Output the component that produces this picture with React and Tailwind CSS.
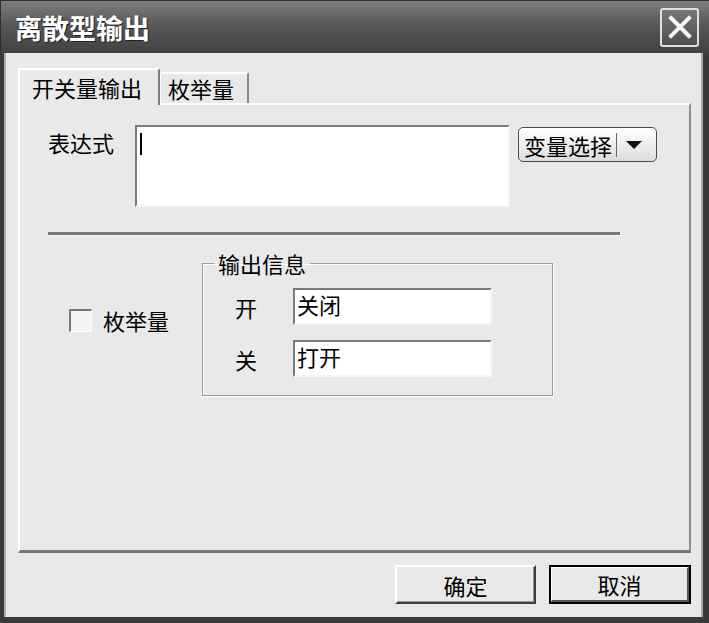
import React from 'react'

const cjk = { fontFamily: '"Noto Sans CJK SC", "Noto Sans", sans-serif' }

function Sunken({ className = '', children }) {
  return (
    <div className={`bg-white border-t-2 border-l-2 border-b-2 border-r-2 border-t-[#7a7a7a] border-l-[#7a7a7a] border-b-[#f6f6f6] border-r-[#f6f6f6] ${className}`}>
      {children}
    </div>
  )
}

export default function App() {
  return (
    <div className="w-[709px] h-[623px] flex flex-col bg-[#e9e9e9] text-black overflow-hidden" style={cjk}>
      {/* title bar */}
      <div className="h-[53px] flex items-center justify-between pl-[14px] pr-[10px] bg-gradient-to-b from-[#7e7e7e] via-[#555] to-[#424242] border-t border-l border-[#2e2e2e]">
        <span className="text-[27px] font-bold text-white leading-none [text-shadow:1px_1px_0_#222]">离散型输出</span>
        <button className="w-[39px] h-[39px] rounded-[3px] border-2 border-[#e0e0e0] bg-gradient-to-b from-[#777] to-[#4e4e4e] flex items-center justify-center">
          <svg width="26" height="26" viewBox="0 0 26 26">
            <path d="M4 4 L22 22 M22 4 L4 22" stroke="#f4f4f4" strokeWidth="4" strokeLinecap="square" />
          </svg>
        </button>
      </div>

      {/* body */}
      <div className="h-[570px] flex flex-col border-l-[4px] border-r-[6px] border-b-[6px] border-[#3a3a3a] pl-[14px] pr-[12px] pt-[15px] shadow-[inset_2px_0_0_#b0b0b0,inset_-2px_0_0_#a8a8a8]">
        {/* tabs */}
        <div className="flex items-end h-[35px]">
          <div className="relative z-10 w-[142px] h-[37px] -mb-[2px] bg-[#e9e9e9] border-t-2 border-l-2 border-r-2 border-t-white border-l-white border-r-[#7c7c7c] rounded-t-[2px] flex items-start pt-[4px] pl-[12px] text-[22px] leading-[26px]">
            开关量输出
          </div>
          <div className="w-[89px] h-[31px] border-t-2 border-r-2 border-l border-t-white border-l-white border-r-[#8a8a8a] rounded-t-[2px] flex items-start pt-[1px] pl-[7px] text-[22px] leading-[26px]">
            枚举量
          </div>
        </div>

        {/* panel */}
        <div className="h-[450px] border-t-2 border-l-2 border-r-2 border-b-[3px] border-t-white border-l-white border-r-[#8c8c8c] border-b-[#777] pl-[28px] pt-[20px]">
          <div className="flex items-start">
            <div className="w-[87px] mt-[4px] text-[22px] leading-[26px]">表达式</div>
            <Sunken className="w-[375px] h-[82px] pl-[3px] pt-[6px]">
              <div className="w-[2px] h-[22px] bg-black" />
            </Sunken>
            <button className="ml-[8px] mt-[2px] w-[139px] h-[35px] rounded-[5px] border border-[#4a4a4a] bg-gradient-to-b from-white to-[#dcdcdc] flex items-center pl-[5px] text-[22px] leading-none">
              <span>变量选择</span>
              <span className="ml-[4px] w-px h-[24px] bg-[#666]" />
              <svg className="ml-[8px]" width="18" height="10" viewBox="0 0 18 10">
                <path d="M1 1 L17 1 L9 9 Z" fill="#111" />
              </svg>
            </button>
          </div>

          <div className="mt-[25px] w-[572px] h-[3px] bg-[#767676]" />
          <div className="w-[572px] h-px bg-[#fafafa]" />

          <div className="flex items-start mt-[15px]">
            <div className="w-[154px] pl-[21px] mt-[56px] flex items-center">
              <div className="w-[23px] h-[23px] bg-[#f4f4f4] border-t-2 border-l-2 border-t-[#7a7a7a] border-l-[#7a7a7a] border-b border-r border-b-white border-r-white" />
              <span className="ml-[11px] text-[22px] leading-[26px]">枚举量</span>
            </div>

            <fieldset className="w-[351px] h-[145px] border border-[#9a9a9a] shadow-[1px_1px_0_#fff,inset_1px_1px_0_#fff]">
              <legend className="ml-[11px] px-[4px] text-[22px] leading-[25px]">输出信息</legend>
              <div className="pl-[32px] pt-[12px]">
                <div className="flex items-center h-[37px]">
                  <span className="w-[58px] text-[22px] leading-none">开</span>
                  <Sunken className="w-[199px] h-[37px] pl-[2px] text-[22px] leading-[28px]">关闭</Sunken>
                </div>
                <div className="flex items-center h-[37px] mt-[15px]">
                  <span className="w-[58px] text-[22px] leading-none">关</span>
                  <Sunken className="w-[199px] h-[37px] pl-[2px] text-[22px] leading-[28px]">打开</Sunken>
                </div>
              </div>
            </fieldset>
          </div>
        </div>

        {/* buttons */}
        <div className="mt-[12px] flex justify-end gap-[13px]">
          <button className="w-[141px] h-[39px] bg-[#e9e9e9] border-t-2 border-l-2 border-t-white border-l-white border-b-2 border-r-2 border-b-[#3c3c3c] border-r-[#3c3c3c] shadow-[inset_-1px_-1px_0_#9a9a9a] text-[22px] leading-none">
            确定
          </button>
          <button className="w-[142px] h-[39px] border-2 border-black p-0">
            <div className="w-full h-full bg-[#e9e9e9] border-t border-l border-t-white border-l-white border-b-2 border-r-2 border-b-[#555] border-r-[#555] flex items-center justify-center text-[22px] leading-none">
              取消
            </div>
          </button>
        </div>
      </div>
    </div>
  )
}
